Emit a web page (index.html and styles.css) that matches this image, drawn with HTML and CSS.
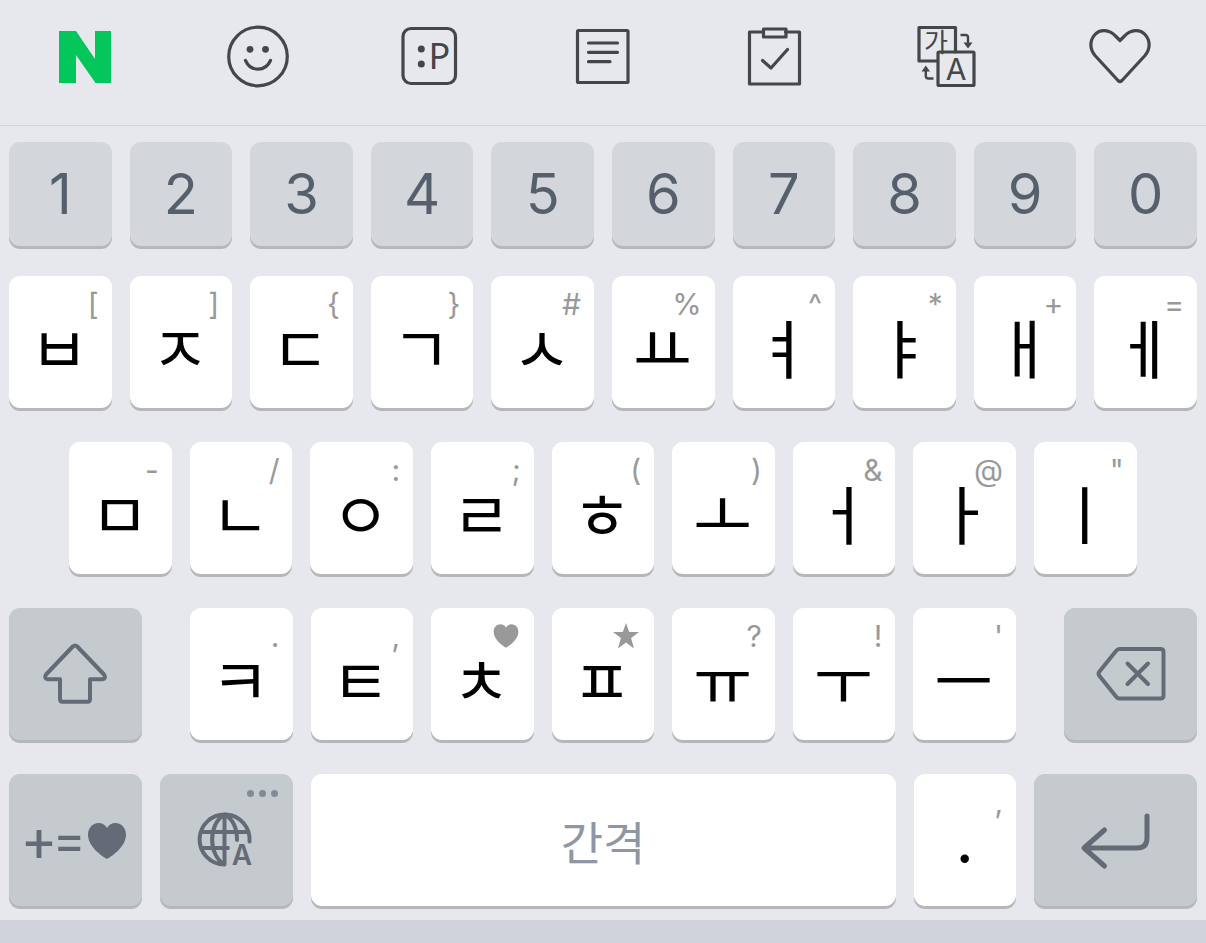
FILE: index.html
```html
<!DOCTYPE html>
<html lang="ko">

	<head>
		<meta charset="UTF-8">
		<title>키보드</title>
		<link rel="stylesheet" href="styles.css">
	</head>

	<body>
		<div class="toolbar">
			<button class="tool" aria-label="N">
				<svg class="logo" viewBox="0 0 64 64"><path d="M5 7h17l19 28V7h16v52H41.500L22 31v28H5z"/></svg>
			</button>
			<button class="tool" aria-label="이모지">
				<svg viewBox="0 0 64 64">
					<circle cx="32" cy="32.500" r="29.300"/>
					<path d="M19.500 36.500C24.500 48 39.500 48 44.500 36.500"/>
					<g class="fill"><circle cx="24" cy="25.300" r="3.400"/><circle cx="39.500" cy="25.300" r="3.400"/></g>
				</svg>
			</button>
			<button class="tool" aria-label="이모티콘">
				<svg viewBox="0 0 64 64">
					<rect x="4" y="4.500" width="52.500" height="55" rx="8"/>
					<g class="fill"><circle cx="22.300" cy="25" r="3.500"/><circle cx="22.300" cy="40" r="3.500"/></g>
					<text class="face" x="29.500" y="45">P</text>
				</svg>
			</button>
			<button class="tool" aria-label="메모">
				<svg viewBox="0 0 64 64">
					<rect x="6.500" y="6.500" width="50.500" height="52" rx="1"/>
					<path d="M17.500 19h29M17.500 28.300h29M17.500 37.700h21.500"/>
				</svg>
			</button>
			<button class="tool" aria-label="클립보드">
				<svg viewBox="0 0 64 64">
					<path d="M20.500 8H6.500V60H56.500V8H42.500"/>
					<rect x="20.500" y="5" width="22.500" height="8"/>
					<path d="M19.500 36.500l8.500 7.500 16.500-18.500"/>
				</svg>
			</button>
			<button class="tool" aria-label="번역">
				<svg viewBox="0 0 64 64">
					<path d="M21 37H3V3.500h36.500V28"/>
					<rect x="22" y="28" width="36" height="33.500" rx="1"/>
					<path class="thin" d="M44.500 11h5q2.500 0 2.500 2.500V19M17.500 54.500h-5q-2.700 0-2.700-2.500v-5"/>
					<path class="fill" d="M47.500 18.500h9L52 24.500zM5.500 47.500H14L9.800 41.500z"/>
					<text class="ga" x="8" y="28">가</text>
					<text class="aa" x="40" y="55.500">A</text>
				</svg>
			</button>
			<button class="tool" aria-label="즐겨찾기">
				<svg viewBox="0 0 64 64"><path d="M32 16.500L27.500 12C21 5 12 5 7 10.500C1.500 16.500 1.500 25 7 31.500L30 56.500q2 2 4 0L57 31.500C62.500 25 62.500 16.500 57 10.500C52 5 43 5 36.500 12z"/></svg>
			</button>
		</div>

		<div class="keyboard">
			<div class="row numbers">
				<button class="key num">1</button>
				<button class="key num">2</button>
				<button class="key num">3</button>
				<button class="key num">4</button>
				<button class="key num">5</button>
				<button class="key num">6</button>
				<button class="key num">7</button>
				<button class="key num">8</button>
				<button class="key num">9</button>
				<button class="key num">0</button>
			</div>

			<div class="row">
				<button class="key">ㅂ<span class="hint">[</span></button>
				<button class="key">ㅈ<span class="hint">]</span></button>
				<button class="key">ㄷ<span class="hint">{</span></button>
				<button class="key">ㄱ<span class="hint">}</span></button>
				<button class="key">ㅅ<span class="hint">#</span></button>
				<button class="key">ㅛ<span class="hint">%</span></button>
				<button class="key">ㅕ<span class="hint">^</span></button>
				<button class="key">ㅑ<span class="hint">*</span></button>
				<button class="key">ㅐ<span class="hint">+</span></button>
				<button class="key">ㅔ<span class="hint">=</span></button>
			</div>

			<div class="row middle">
				<button class="key">ㅁ<span class="hint">-</span></button>
				<button class="key">ㄴ<span class="hint">/</span></button>
				<button class="key">ㅇ<span class="hint">:</span></button>
				<button class="key">ㄹ<span class="hint">;</span></button>
				<button class="key">ㅎ<span class="hint">(</span></button>
				<button class="key">ㅗ<span class="hint">)</span></button>
				<button class="key">ㅓ<span class="hint">&amp;</span></button>
				<button class="key">ㅏ<span class="hint">@</span></button>
				<button class="key">ㅣ<span class="hint">"</span></button>
			</div>

			<div class="row">
				<button class="key fn" aria-label="Shift">
					<svg class="icon" viewBox="0 0 72 72"><path d="M33.800 8.500q2.200-2 4.400 0L65 36.500q2.500 4-1.500 4.800H51V61q0 2.700-2.500 2.700h-25Q21 63.700 21 61V41.300H9q-4.500-.8-2-4.800z"/></svg>
				</button>
				<button class="key first">ㅋ<span class="hint">.</span></button>
				<button class="key">ㅌ<span class="hint">,</span></button>
				<button class="key" aria-label="ㅊ">ㅊ<span class="hint"><svg class="mark" viewBox="0 0 40 38"><path d="M20 37C14 33.500 1 24.500 1 12.500C1 .5 15-3 20 6C25-3 39 .5 39 12.500C39 24.500 26 33.500 20 37z"/></svg></span></button>
				<button class="key" aria-label="ㅍ">ㅍ<span class="hint"><svg class="mark" viewBox="0 0 26 26"><path d="M13 0l3.200 9H26l-7.900 6 2.900 10.500-8-6-8 6L7.900 15 0 9h9.800z"/></svg></span></button>
				<button class="key">ㅠ<span class="hint">?</span></button>
				<button class="key">ㅜ<span class="hint">!</span></button>
				<button class="key">ㅡ<span class="hint">'</span></button>
				<button class="key fn back" aria-label="지우기">
					<svg class="icon" viewBox="0 0 72 72"><path d="M24.500 11H65.500q3 0 3 3V57.500q0 3-3 3H24.500q-2 0-3.500-2L4.500 38q-1.800-2.300 0-4.500L21 13q1.500-2 3.500-2zM32.500 25.500L53 46M53 25.500L32.500 46"/></svg>
				</button>
			</div>

			<div class="row">
				<button class="key fn symbols" aria-label="기호">+=<svg class="heart" viewBox="0 0 40 38"><path d="M20 37C14 33.500 1 24.500 1 12.500C1 .5 15-3 20 6C25-3 39 .5 39 12.500C39 24.500 26 33.500 20 37z"/></svg></button>
				<button class="key fn" aria-label="언어">
					<svg class="icon" viewBox="0 0 72 72">
						<path d="M34.500 60.500a25 25 0 1 1 25-23M34.500 10.500v50M12 28h46M12 44h26M34.500 10.500C18 20 18 51 34.500 60.500M34.500 10.500C43 15 47 25 47 36"/>
						<text class="lang" x="52" y="61">A</text>
					</svg>
					<span class="hint dots"><i></i><i></i><i></i></span>
				</button>
				<button class="key space">간격</button>
				<button class="key dot">.<span class="hint">,</span></button>
				<button class="key fn enter" aria-label="Enter">
					<svg class="icon bold" viewBox="0 0 72 72"><path d="M67 12v22q0 10-10 10H5M24.500 26L4 44l20.500 18"/></svg>
				</button>
			</div>
		</div>
	</body>

</html>
```

FILE: styles.css
```css
html,
body {
	margin: 0;
	padding: 0;
}

body {
	min-height: 100vh;
	background-color: #d0d3dc;
	font-family: Inter, "Noto Sans CJK KR", sans-serif;
}

button {
	margin: 0;
	padding: 0;
	border: 0;
	background: none;
	font-family: inherit;
	color: inherit;
}

svg {
	display: block;
	overflow: visible;
}

/* 상단 도구 모음 */
.toolbar {
	display: flex;
	padding: 24px 0 37px;
	background-color: #e6e8ed;
	border-bottom: 1px solid #d3d6dc;
}

.tool {
	flex: 1;
	display: flex;
	justify-content: center;
}

.tool svg {
	width: 64px;
	height: 64px;
	fill: none;
	stroke: #444749;
	stroke-width: 3.2;
	stroke-linecap: round;
	stroke-linejoin: round;
}

.tool .logo {
	fill: #03c75a;
	stroke: none;
}

.tool .thin {
	stroke-width: 2.4;
	stroke-linecap: butt;
}

.tool .fill,
.tool text {
	fill: #444749;
	stroke: none;
}

.tool .face {
	font-family: "Noto Sans", sans-serif;
	font-size: 36px;
}

.tool .ga {
	font-family: "Noto Sans CJK KR", sans-serif;
	font-size: 26px;
}

.tool .aa {
	font-size: 30px;
	text-anchor: middle;
}

/* 키보드 */
.keyboard {
	display: grid;
	row-gap: 34px;
	padding: 16px 0 14px;
	background-color: #e6e8ed;
}

.row {
	display: grid;
	grid-template-columns: repeat(40, 1fr);
}

.numbers {
	margin-bottom: -4px;
}

.key {
	grid-column: span 4;
	position: relative;
	display: flex;
	justify-content: center;
	align-items: center;
	height: 132px;
	margin: 0 9px;
	padding: 6px 2px 0 0;
	box-sizing: border-box;
	border-radius: 11px;
	background-color: #fff;
	box-shadow: 0 3px 0 #b5b7bb;
	font-family: "Noto Sans CJK KR", sans-serif;
	font-size: 64px;
	font-weight: 400;
	line-height: 60px;
	color: #000;
}

.num {
	height: 104px;
	padding: 0;
	background-color: #d3d6db;
	font-family: Inter, sans-serif;
	font-size: 56px;
	color: #56606c;
}

.middle .key:first-child {
	grid-column: 3 / span 4;
}

.first {
	grid-column: 7 / span 4;
}

.fn {
	grid-column: span 5;
	padding: 0;
	background-color: #c5cacf;
	color: #646b77;
}

.back {
	grid-column: 36 / span 5;
}

.space {
	grid-column: span 20;
	padding: 0;
	font-size: 46px;
	color: #8f97a4;
}

.enter {
	grid-column: span 6;
}

.dot {
	padding: 0;
	font-family: Inter, sans-serif;
}

.symbols {
	gap: 3px;
	padding-top: 8px;
	font-family: Roboto, sans-serif;
	font-size: 54px;
}

.hint {
	position: absolute;
	top: 13px;
	right: 13px;
	font-family: Inter, sans-serif;
	font-size: 30px;
	font-weight: 400;
	line-height: 30px;
	color: #999;
}

.mark {
	width: 26px;
	height: 26px;
	margin: 2px 2px 0 0;
	fill: #999;
}

.heart {
	width: 40px;
	height: 38px;
	margin-bottom: 6px;
	fill: #646b77;
}

.icon {
	width: 72px;
	height: 72px;
	fill: none;
	stroke: #646b77;
	stroke-width: 4;
	stroke-linecap: round;
	stroke-linejoin: round;
}

.bold {
	stroke-width: 5;
}

.lang {
	fill: #646b77;
	stroke: none;
	font-family: Inter, sans-serif;
	font-size: 28px;
	font-weight: 600;
	text-anchor: middle;
}

.dots {
	display: flex;
	top: 16px;
	right: 15px;
	gap: 5px;
}

.dots i {
	width: 7px;
	height: 7px;
	border-radius: 50%;
	background-color: #838995;
}
```
